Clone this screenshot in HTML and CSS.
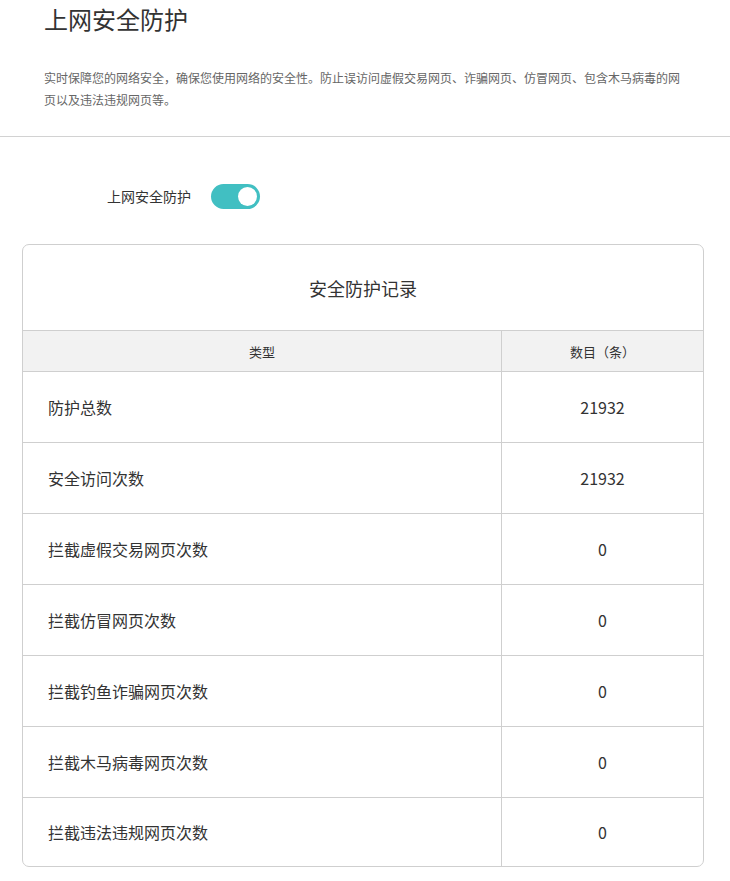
FILE: index.html
```html
<!DOCTYPE html>
<html lang="zh-CN">
<head>
<meta charset="utf-8">
<title>上网安全防护</title>
<link rel="stylesheet" href="styles.css">
</head>
<body>
<div class="page">
  <header class="head">
    <h1 class="title">上网安全防护</h1>
    <p class="desc">实时保障您的网络安全，确保您使用网络的安全性。防止误访问虚假交易网页、诈骗网页、仿冒网页、包含木马病毒的网页以及违法违规网页等。</p>
  </header>
  <div class="switch-row">
    <span class="switch-label">上网安全防护</span>
    <span class="switch on"><span class="knob"></span></span>
  </div>
  <section class="card">
    <div class="card-title">安全防护记录</div>
    <div class="row head-row">
      <div class="cell c1">类型</div>
      <div class="cell c2">数目（条）</div>
    </div>
    <div class="row"><div class="cell c1">防护总数</div><div class="cell c2">21932</div></div>
    <div class="row"><div class="cell c1">安全访问次数</div><div class="cell c2">21932</div></div>
    <div class="row"><div class="cell c1">拦截虚假交易网页次数</div><div class="cell c2">0</div></div>
    <div class="row"><div class="cell c1">拦截仿冒网页次数</div><div class="cell c2">0</div></div>
    <div class="row"><div class="cell c1">拦截钓鱼诈骗网页次数</div><div class="cell c2">0</div></div>
    <div class="row"><div class="cell c1">拦截木马病毒网页次数</div><div class="cell c2">0</div></div>
    <div class="row last"><div class="cell c1">拦截违法违规网页次数</div><div class="cell c2">0</div></div>
  </section>
</div>
</body>
</html>
```

FILE: styles.css
```css
html, body {
  margin: 0;
  padding: 0;
  background: #fff;
}
body {
  font-family: "Noto Sans CJK SC", "Noto Sans", sans-serif;
  color: #333;
}
.head {
  padding: 1px 0 0 44px;
  border-bottom: 1px solid #d2d2d2;
  height: 137px;
  box-sizing: border-box;
}
.title {
  margin: 0;
  font-size: 24px;
  font-weight: normal;
  line-height: 36px;
  color: #333;
}
.desc {
  margin: 30px 0 0 0;
  width: 642px;
  font-size: 12px;
  line-height: 22px;
  color: #666;
}
.switch-row {
  display: flex;
  align-items: center;
  padding: 46px 0 0 107px;
  height: 26px;
  gap: 20px;
}
.switch-label {
  font-size: 14px;
  line-height: 26px;
  color: #333;
}
.switch {
  display: flex;
  align-items: center;
  justify-content: flex-end;
  width: 49px;
  height: 25px;
  box-sizing: border-box;
  padding: 0 3px;
  border-radius: 13px;
  background: #41bfc2;
}
.knob {
  width: 19px;
  height: 19px;
  border-radius: 50%;
  background: #fff;
}
.card {
  margin: 35px 0 0 22px;
  width: 682px;
  box-sizing: border-box;
  border: 1px solid #cfcfcf;
  border-radius: 7px;
  overflow: hidden;
}
.card-title {
  height: 85px;
  display: flex;
  align-items: center;
  justify-content: center;
  font-size: 18px;
  color: #333;
}
.row {
  display: grid;
  grid-template-columns: 478px 1fr;
  border-top: 1px solid #cfcfcf;
  height: 70px;
}
.row.last {
  height: 68px;
}
.head-row {
  height: 40px;
  background: #f2f2f2;
  border-bottom: 0;
}
.cell {
  display: flex;
  align-items: center;
  font-size: 16px;
  color: #333;
}
.c1 {
  padding-left: 25px;
}
.c2 {
  border-left: 1px solid #cfcfcf;
  justify-content: center;
}
.head-row .cell {
  font-size: 13px;
}
.head-row .c1 {
  padding-left: 0;
  justify-content: center;
}
```
